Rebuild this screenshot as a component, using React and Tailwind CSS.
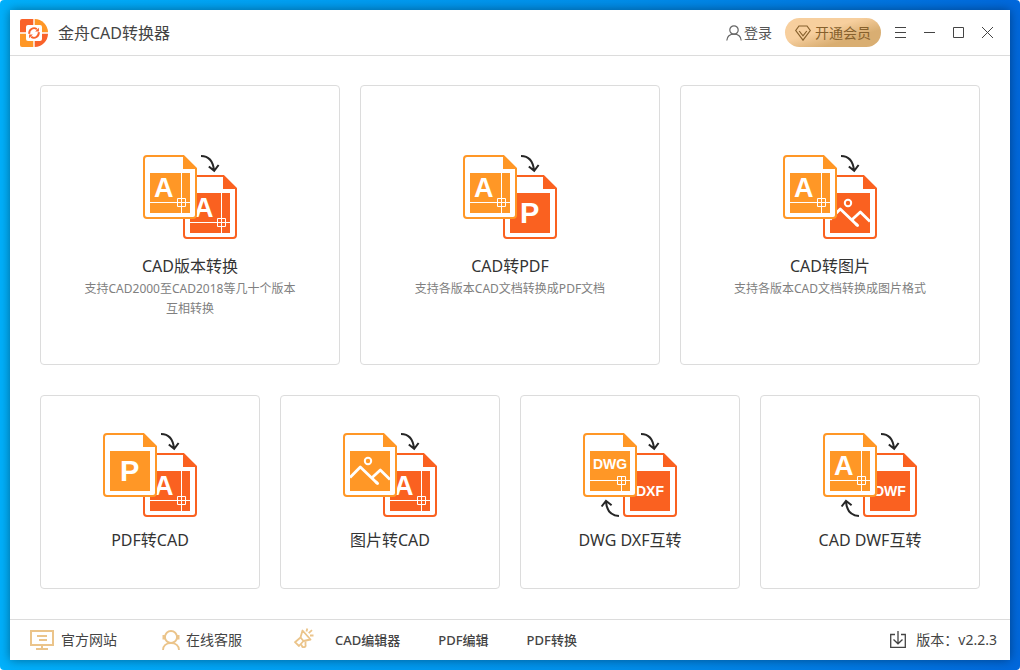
const ORANGE = '#ff9726'
const RED = '#fa6120'

const MAIN_TOOLS = [
  { title: 'CAD版本转换', desc: '支持CAD2000至CAD2018等几十个版本互相转换', from: 'A', to: 'A' },
  { title: 'CAD转PDF', desc: '支持各版本CAD文档转换成PDF文档', from: 'A', to: 'P' },
  { title: 'CAD转图片', desc: '支持各版本CAD文档转换成图片格式', from: 'A', to: 'image' },
]

const MORE_TOOLS = [
  { title: 'PDF转CAD', from: 'P', to: 'A' },
  { title: '图片转CAD', from: 'image', to: 'A' },
  { title: 'DWG DXF互转', from: 'DWG', to: 'DXF', both: true },
  { title: 'CAD DWF互转', from: 'A', to: 'DWF', both: true },
]

// where each label sits on the 54x64 sheet
const LABELS = {
  A: { x: 11, y: 42, size: 27 },
  P: { x: 17, y: 48, size: 29 },
  DWG: { x: 10, y: 36, size: 14 },
  DXF: { x: 13, y: 43, size: 14 },
  DWF: { x: 11, y: 43, size: 14 },
}

function Sheet({ kind, color }) {
  const label = LABELS[kind]
  return (
    <>
      <path d="M4 1H40.5L53 13.5V60a3 3 0 0 1-3 3H4a3 3 0 0 1-3-3V4a3 3 0 0 1 3-3Z" fill="#fff" stroke={color} strokeWidth="2" />
      <path d="M40 0.5V14H53.5Z" fill={color} />
      <path d="M7 18h40v40H7z" fill={color} />
      {label && (
        <text x={label.x} y={label.y} fontSize={label.size} fontWeight="700" fill="#fff" fontFamily='"Liberation Sans", Arial, sans-serif'>
          {kind}
        </text>
      )}
      {(kind === 'A' || kind === 'DWG') && (
        <path
          d={kind === 'A' ? 'M7 47.5H47M38.5 18V58M34.5 43.5h8v8h-8z' : 'M7 47.5H47M38.5 43V58M34.5 43.5h8v8h-8z'}
          fill="none"
          stroke="#fff"
        />
      )}
      {kind === 'image' && (
        <g fill="none" stroke="#fff" strokeWidth="2.8">
          <circle cx="25" cy="28" r="3.2" strokeWidth="2" />
          <path d="M7 44.5 17.3 34 34.5 50.5" strokeLinejoin="round" />
          <path d="M28.7 45 37.3 37 47 46.5" strokeLinejoin="round" />
          <path d="m33 49 1.6 1.6" strokeLinecap="round" />
        </g>
      )}
    </>
  )
}

function ConvertIcon({ from, to, both }) {
  return (
    <svg width="94" height="84" viewBox="0 0 94 84" aria-hidden="true">
      <g transform="translate(40 20)"><Sheet kind={to} color={RED} /></g>
      <Sheet kind={from} color={ORANGE} />
      <g fill="none" stroke="#262626" strokeWidth="2">
        <path d="M58 1C65 1 70 5.500 71 15.500M65.800 11.500 71.200 15.800 75.600 10" />
        {both && <path d="M36 83C28 82.500 23.500 77.500 23 68.500M18.600 73.500 23 67.800 28.600 72.200" />}
      </g>
    </svg>
  )
}

function Logo() {
  return (
    <svg width="28" height="28" viewBox="0 0 28 28" aria-hidden="true">
      <path d="M2 0H13.300V13.300H0V2A2 2 0 0 1 2 0Z" fill="#f9622a" />
      <path d="M14.700 0A13.500 13.500 0 0 1 28 13.300H14.700Z" fill={ORANGE} />
      <path d="M0 14.700H13.300V28H2A2 2 0 0 1 0 26Z" fill={ORANGE} />
      <path d="M14.700 14.700H28A13.500 13.500 0 0 1 14.700 28Z" fill="#f9622a" />
      <rect x="6" y="6" width="16" height="16" rx="2" fill="#fff" />
      <g fill="none" stroke="#f9622a" strokeWidth="1.900">
        <path d="M9.300 14.800A4.800 4.800 0 0 1 16.800 10.100M18.700 13.200A4.800 4.800 0 0 1 11.200 17.900" />
      </g>
      <path d="M18.900 8.700V12.400H15.200ZM9.100 19.300V15.600H12.800Z" fill="#f9622a" />
    </svg>
  )
}

function WindowButton({ label, d }) {
  return (
    <button aria-label={label} className="text-[#444]">
      <svg width="12" height="12" viewBox="0 0 12 12" fill="none" stroke="currentColor"><path d={d} /></svg>
    </button>
  )
}

function Header() {
  return (
    <header className="flex h-[46px] items-center border-b border-[#dcdcdc] pr-4 pl-2.5">
      <Logo />
      <h1 className="ml-2.5 text-base text-[#444]">金舟CAD转换器</h1>
      <div className="ml-auto flex items-center">
        <button className="flex items-center gap-0.5 text-sm text-[#555]">
          <svg width="16" height="16" viewBox="0 0 16 16" fill="none" stroke="#666" strokeWidth="1.200">
            <circle cx="8" cy="5" r="4.200" />
            <path d="M.8 15.500C1.200 11.500 4 9.200 8 9.200s6.800 2.300 7.200 6.300" />
          </svg>
          登录
        </button>
        <button className="ml-[13px] flex h-[29px] items-center gap-1 rounded-full bg-linear-to-br from-[#f7cf9e] from-40% to-[#d9ae72] to-70% px-2.5 text-sm text-[#86602c]">
          <svg width="16" height="16" viewBox="0 0 16 16" fill="none" stroke="currentColor" strokeWidth="1.200">
            <path d="M4 1h8l3.300 4.500L8 15.200.7 5.500Z" />
            <path d="M4.200 6 8 10.800 11.800 6" />
          </svg>
          开通会员
        </button>
        <div className="ml-3.5 flex items-center gap-[17px]">
          <WindowButton label="菜单" d="M0 .5H11M0 5.500H11M0 10.500H11" />
          <WindowButton label="最小化" d="M0 5.500H11" />
          <WindowButton label="最大化" d="M.5.5h10v10H.5z" />
          <WindowButton label="关闭" d="M0 0l11 11M11 0l-11 11" />
        </div>
      </div>
    </header>
  )
}

function MainCard({ tool }) {
  return (
    <button className="flex min-h-[280px] flex-col items-center rounded border border-[#dcdcdc] px-10 pt-[69px]">
      <ConvertIcon {...tool} />
      <span className="mt-[15px] text-base leading-6 text-[#333]">{tool.title}</span>
      <span className="mt-px max-w-[220px] text-xs leading-5 text-[#808080]">{tool.desc}</span>
    </button>
  )
}

function SmallCard({ tool }) {
  return (
    <button className="flex min-h-[194px] flex-col items-center rounded border border-[#dcdcdc] pt-[37px]">
      <ConvertIcon {...tool} />
      <span className="mt-[11px] text-base leading-6 text-[#333]">{tool.title}</span>
    </button>
  )
}

function Footer() {
  return (
    <footer className="flex h-[41px] items-center border-t border-[#dcdcdc] pr-[13px] pl-5 text-sm text-[#444]">
      <a href="#site" className="flex items-center gap-[7px]">
        <svg width="24" height="20" viewBox="0 0 24 20" fill="none" stroke="#ebc48a" strokeWidth="2">
          <path d="M1 1h22v14H1zM12 15v4M6 19h12M7 6h10M9 10h8" />
        </svg>
        官方网站
      </a>
      <a href="#service" className="ml-[45px] flex items-center gap-1.5">
        <svg width="18" height="20" viewBox="0 0 18 20" fill="none" stroke="#ebc48a" strokeWidth="1.800">
          <circle cx="9" cy="7" r="6" />
          <path d="M2 5v4.500M16 5v4.500" strokeWidth="3" />
          <path d="M1 20c.3-4.300 3.500-6.800 8-6.800s7.700 2.500 8 6.800" />
        </svg>
        在线客服
      </a>
      <div className="ml-[52px] flex items-center text-[13px] font-medium">
        <svg width="20" height="20" viewBox="0 0 20 20" fill="none" stroke="#ebc48a" strokeWidth="1.800" strokeLinejoin="round" className="mr-[21px] mb-1">
          <path d="M8.500 2.500 16.500 11.500 9.500 13 5 18 1 14.200 6.500 9.500Z" />
          <path d="m6.500 9.500 3 3.500M11.500 13.500v3.200a1.800 1.800 0 0 1-3.600 1.200l-.8-1.500M12.500 3.500 13.300.5M14.700 5.200 18 2.200M16 7.500h3.500" />
        </svg>
        <a href="#cad-editor">CAD编辑器</a>
        <a href="#pdf-editor" className="ml-[38px]">PDF编辑</a>
        <a href="#pdf-convert" className="ml-[38px]">PDF转换</a>
      </div>
      <button className="ml-auto flex items-center gap-2.5">
        <svg width="16" height="17" viewBox="0 0 16 17" fill="none" stroke="#444" strokeWidth="1.300" className="mb-0.5">
          <path d="M5 3.500H.7v12.800h14.600V3.500H11" />
          <path d="M8 0v12.500M3.500 8.500 8 12.800l4.500-4.300" />
        </svg>
        版本：v2.2.3
      </button>
    </footer>
  )
}

export default function App() {
  return (
    <div className="bg-white font-['Noto_Sans','Noto_Sans_CJK_SC',sans-serif]">
      <div className="flex min-h-screen flex-col rounded bg-linear-to-r from-[#00b0fb] via-[#008eea] via-60% to-[#0068dc] p-2.5">
        <div className="flex flex-1 flex-col bg-white shadow-[0_0_10px_rgba(0,0,0,0.4)]">
          <Header />
          <main className="flex-1 px-[30px] py-[29px]">
            <div className="grid grid-cols-3 gap-5">
              {MAIN_TOOLS.map(tool => <MainCard key={tool.title} tool={tool} />)}
            </div>
            <div className="mt-[30px] grid grid-cols-4 gap-5">
              {MORE_TOOLS.map(tool => <SmallCard key={tool.title} tool={tool} />)}
            </div>
          </main>
          <Footer />
        </div>
      </div>
    </div>
  )
}
